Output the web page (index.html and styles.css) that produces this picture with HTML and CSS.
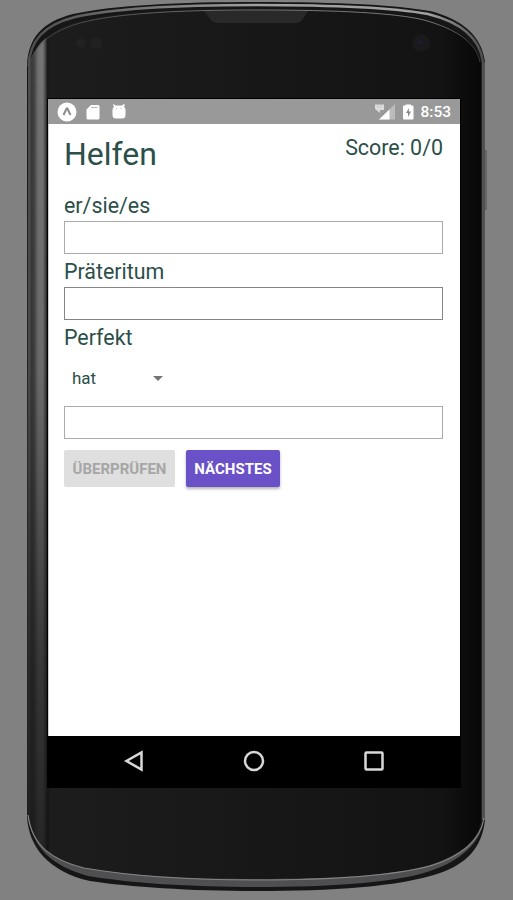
FILE: index.html
```html
<!DOCTYPE html>
<html lang="de">
<head>
    <meta charset="UTF-8">
    <meta name="viewport" content="width=device-width, initial-scale=1.0">
    <title>Helfen</title>
    <link rel="stylesheet" href="styles.css">
</head>
<body>
    <div class="phone">
        <svg class="shell" width="513" height="900" viewBox="0 0 513 900" aria-hidden="true">
            <defs>
                <linearGradient id="side" gradientUnits="userSpaceOnUse" x1="27" y1="0" x2="49" y2="0">
                    <stop offset="0" stop-color="#303030"/>
                    <stop offset=".09" stop-color="#555"/>
                    <stop offset=".2" stop-color="#393939"/>
                    <stop offset=".32" stop-color="#414141"/>
                    <stop offset=".5" stop-color="#707070"/>
                    <stop offset=".7" stop-color="#777"/>
                    <stop offset=".82" stop-color="#505050"/>
                    <stop offset=".92" stop-color="#1a1a1a"/>
                </linearGradient>
                <linearGradient id="shade" x1="0" y1="0" x2="0" y2="1">
                    <stop offset="0" stop-color="#151515" stop-opacity="0"/>
                    <stop offset=".4" stop-color="#151515" stop-opacity=".1"/>
                    <stop offset=".75" stop-color="#151515" stop-opacity=".65"/>
                    <stop offset="1" stop-color="#151515" stop-opacity=".85"/>
                </linearGradient>
                <linearGradient id="face" x1="0" y1="0" x2="1" y2="0">
                    <stop offset="0" stop-color="#1d1d1d"/>
                    <stop offset=".9" stop-color="#131313"/>
                    <stop offset="1" stop-color="#070707"/>
                </linearGradient>
                <linearGradient id="rim" gradientUnits="userSpaceOnUse" x1="27" y1="0" x2="485" y2="0">
                    <stop offset="0" stop-color="#4c4c4c"/>
                    <stop offset=".5" stop-color="#a0a0a0"/>
                    <stop offset=".88" stop-color="#a0a0a0"/>
                    <stop offset="1" stop-color="#4a4a4a"/>
                </linearGradient>
                <clipPath id="front">
                    <path d="M28 66C36 42 52 29 80 21C118 12 180 9 256 9C340 9 395 12 424 19C456 28 476 40 481 62V820C478 842 458 856 430 865C392 876 330 879 256 879C190 879 130 876 84 868C52 860 32 846 27 815Z"/>
                </clipPath>
            </defs>

            <!-- volume key -->
            <rect x="484" y="150" width="3" height="60" fill="#666"/>

            <!-- body -->
            <path fill="#161616" d="M27 66C28 38 42 22 73 14C115 5 180 2 256 2C340 2 395 5 430 11C462 19 482 36 485 62V820C482 848 466 864 440 873C400 887 330 891 256 891C190 891 130 887 90 881C50 872 28 848 27 815Z"/>
            <rect x="481" y="62" width="4" height="758" fill="#515151"/>
            <rect x="481" y="62" width="1" height="758" fill="#222"/>

            <!-- glass and left edge -->
            <g clip-path="url(#front)">
                <rect x="27" width="458" height="900" fill="url(#face)"/>
                <rect x="27" width="22" height="900" fill="url(#side)"/>
                <rect x="27" y="30" width="22" height="850" fill="url(#shade)"/>
            </g>

            <!-- top rim -->
            <path fill="none" stroke="url(#rim)" stroke-width="2.5" d="M28.500 66C30 40 44 25 75 17C115 8 180 5 256 5C340 5 395 8 428 14C460 22 480 38 483 62"/>
            <path fill="none" stroke="url(#rim)" stroke-opacity=".7" d="M29 64C37 43 52 31 80 23C118 13 180 10 256 10C340 10 395 13 424 20C456 29 476 42 480 62"/>

            <!-- bottom rim -->
            <path fill="#4f4f51" d="M28 815C32 846 52 860 84 868C130 876 190 879 256 879C330 879 392 876 430 865C458 856 478 842 484 820C480 844 460 861 430 871C395 883 330 887 256 887C190 887 130 883 88 876C52 866 32 848 28 815Z"/>
            <path fill="none" stroke="#858585" stroke-width="1.200" d="M28 815C32 846 52 860 84 868C130 876 190 880 256 880C330 880 392 876 430 866C460 857 480 842 484 818"/>

            <!-- speaker, sensors, camera -->
            <path fill="#292929" d="M204 11H308L302 20Q300 23 296 23H218Q213 23 210 19Z"/>
            <circle cx="81" cy="43" r="5" fill="#212121"/>
            <circle cx="96" cy="43" r="6" fill="#212121"/>
            <circle cx="421" cy="43" r="9" fill="#1a1a1b"/>
            <circle cx="420" cy="42" r="2" fill="#1c1a38"/>

            <rect x="47" y="98" width="414" height="690" fill="#000"/>
        </svg>

        <div class="screen">
            <header class="status-bar">
                <svg width="72" height="25" viewBox="0 0 72 25" aria-hidden="true">
                    <circle cx="11" cy="13" r="9.500" fill="#fff"/>
                    <path d="M7.500 16L10.600 9.500H11.400L14.500 16" fill="none" stroke="#8c8c8c" stroke-width="2"/>
                    <path d="M35 6H42Q43.500 6 43.500 7.500V19Q43.500 20.500 42 20.500H32Q30.500 20.500 30.500 19V10.500Z" fill="#fff"/>
                    <path d="M35 8.500H41.500" stroke="#bbb" stroke-width="1.200"/>
                    <path d="M57.500 5L59.500 6.500H66L68 5L69 6L68 7.500Q69.500 9 69.500 11V16Q69.500 19.500 66 19.500H60Q56.500 19.500 56.500 16V11Q56.500 9 58 7.500L57 6Z" fill="#fff"/>
                    <path d="M60 9.500H61M64.500 9.500H65.500" stroke="#bbb"/>
                </svg>
                <div class="status-right">
                    <svg width="41" height="25" viewBox="0 0 41 25" aria-hidden="true">
                        <path d="M22 5V20.500H6Z" fill="#bbb"/>
                        <path d="M16.500 10.500V20.500H6Z" fill="#fff"/>
                        <path d="M2 5.500H11V11H7V14L2 10Z" fill="#dcdcdc"/>
                        <path d="M5 6V9M8 6V9" stroke="#bbb" stroke-width=".8"/>
                        <path d="M32.500 5.500H38V6.500H39.500Q40.500 6.500 40.500 7.500V19.500Q40.500 20.500 39.500 20.500H31Q30 20.500 30 19.500V7.500Q30 6.500 31 6.500H32.500Z" fill="#fff"/>
                        <path d="M36 9L33 14H35V18L38 12.500H35.800Z" fill="#888"/>
                    </svg>
                    <span class="clock">8:53</span>
                </div>
            </header>

            <main>
                <div class="heading">
                    <h1>Helfen</h1>
                    <span class="score">Score: 0/0</span>
                </div>

                <form>
                    <label for="present">er/sie/es</label>
                    <input id="present" type="text">

                    <label for="past">Präteritum</label>
                    <input id="past" class="dark" type="text">

                    <label for="perfect">Perfekt</label>
                    <div class="picker">
                        <span>hat</span>
                        <svg width="10" height="5" viewBox="0 0 10 5" aria-hidden="true">
                            <path d="M0 0H10L5 5Z" fill="#757575"/>
                        </svg>
                    </div>
                    <input id="perfect" type="text">

                    <div class="buttons">
                        <button class="check" type="button" disabled>ÜBERPRÜFEN</button>
                        <button class="next" type="button">NÄCHSTES</button>
                    </div>
                </form>
            </main>

            <nav>
                <svg width="24" height="24" viewBox="0 0 24 24" aria-label="Back">
                    <path d="M19.500 3.500V20.500L4.500 12Z"/>
                </svg>
                <svg width="24" height="24" viewBox="0 0 24 24" aria-label="Home">
                    <circle cx="12" cy="12" r="9"/>
                </svg>
                <svg width="24" height="24" viewBox="0 0 24 24" aria-label="Overview">
                    <rect x="3.500" y="3.500" width="17" height="17" rx="1"/>
                </svg>
            </nav>
        </div>
    </div>
</body>
</html>
```
FILE: styles.css
```css
* {
    box-sizing: border-box;
}

body {
    margin: 0;
    background: #818181;
    font-family: Roboto, sans-serif;
    color: #2b4f49;
}

.phone {
    position: relative;
    width: 513px;
    height: 900px;
    padding: 99px 53px 112px 48px;
    overflow: hidden;
}

/* device frame lies behind the screen */
.shell {
    position: absolute;
    top: 0;
    left: 0;
}

.screen {
    position: relative;
    display: flex;
    flex-direction: column;
    width: 412px;
    height: 689px;
    background: #fff;
}

.status-bar {
    display: flex;
    justify-content: space-between;
    height: 25px;
    padding: 0 9px 0 8px;
    background: #999;
    color: #fff;
}

.status-right {
    display: flex;
    gap: 6px;
}

.clock {
    font-size: 15.5px;
    font-weight: 500;
    line-height: 27px;
}

main {
    flex: 1;
    padding: 0 17px 0 15px;
    border-left: 1px solid #ccc;
}

.heading {
    display: flex;
    justify-content: space-between;
    height: 67px;
}

h1 {
    margin: 0;
    font-size: 32px;
    font-weight: 400;
    line-height: 60px;
}

.score {
    font-size: 21.4px;
    line-height: 47px;
}

form {
    display: flex;
    flex-direction: column;
}

label {
    height: 30px;
    font-size: 21.4px;
    line-height: 29px;
}

input {
    height: 33px;
    margin: 0 0 3px;
    padding: 0 8px;
    border: 1px solid #aaa;
    background: #fff;

    &.dark {
        border-color: #858585;
    }
}

.picker {
    display: flex;
    align-items: center;
    justify-content: space-between;
    width: 99px;
    height: 53px;
    padding: 0 0 3px 8px;
    font-size: 17px;
}

.buttons {
    display: flex;
    gap: 11px;
    padding-top: 8px;
}

button {
    height: 37px;
    padding: 0;
    border: 0;
    border-radius: 2px;
    font-family: inherit;
    font-size: 15px;
    font-weight: 700;
}

.check {
    width: 111px;
    background: #dfdfdf;
    color: #a6a6a6;
}

.next {
    width: 94px;
    background: #6a51c8;
    color: #fff;
    box-shadow: 0 2px 3px rgba(0, 0, 0, 0.3);
}

nav {
    display: flex;
    align-items: center;
    justify-content: center;
    gap: 96px;
    height: 52px;
    padding: 0 1px 2px 0;
    background: #000;

    svg {
        fill: none;
        stroke: #d8d8d8;
        stroke-width: 2.5;
    }
}
```
